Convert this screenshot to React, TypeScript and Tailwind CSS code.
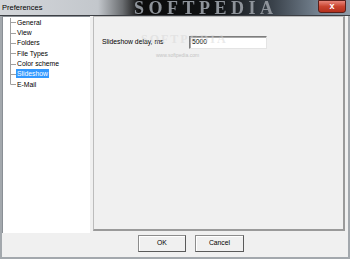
import React from 'react'

const items = ['General', 'View', 'Folders', 'File Types', 'Color scheme', 'Slideshow', 'E-Mail']
const ROW = 10.35

const TreeLines = () => {
  const last = ROW / 2 + ROW * (items.length - 1)
  return (
    <svg width="13" height={ROW * items.length} className="shrink-0">
      <line x1="7.5" y1="1" x2="7.5" y2={last} stroke="#a0a0a0" strokeWidth="1" />
      {items.map((_, i) => {
        const y = Math.round(ROW / 2 + ROW * i) + 0.5
        return <line key={i} x1="7.5" y1={y} x2="13" y2={y} stroke="#a0a0a0" strokeWidth="1" />
      })}
    </svg>
  )
}

const App = () => {
  return (
    <div className="relative w-[350px] h-[259px] flex flex-col bg-[#f0f0f0] overflow-hidden font-['Liberation_Sans',Arial,sans-serif]">
      {/* title bar */}
      <div className="relative h-[16px] shrink-0 flex items-center border-b border-[#3c3f44] bg-[linear-gradient(90deg,#d3d6da_0%,#c3c7cc_28%,#6a6d70_35%,#0c0c0c_40%,#101214_62%,#3a424b_78%,#7a8896_92%,#8d9aa7_100%)]">
        <span className="pl-[2px] text-[7.5px] text-black leading-none">Preferences</span>
        <span className="absolute left-[134px] top-0 text-[18px] font-bold tracking-[4.5px] text-[#8e939a] font-['Liberation_Serif',serif] blur-[0.6px] leading-[16px]">
          SOFTPEDIA
        </span>
        <div className="absolute right-[4px] top-0 w-[28px] h-[13px] rounded-b-[3px] border border-[#5a1f1a] bg-[linear-gradient(180deg,#e8867a_0%,#c9442f_50%,#b3301d_100%)] flex items-center justify-center">
          <span className="text-[9px] font-bold text-white leading-none">x</span>
        </div>
      </div>

      {/* body */}
      <div className="flex-1 flex flex-col border-l-2 border-r-2 border-b-2 border-[#a3a8ad]">
        <div className="flex h-[217px]">
          {/* tree */}
          <div className="w-[88px] h-full bg-white border-l border-t border-[#8a8f95] flex">
            <TreeLines />
            <ul className="flex flex-col text-[6.8px] text-black">
              {items.map((t) => (
                <li key={t} className="h-[10.35px] flex items-center">
                  <span
                    className={
                      t === 'Slideshow'
                        ? 'px-px leading-[9px] bg-[#3399ff] text-white'
                        : 'px-px leading-[9px]'
                    }
                  >
                    {t}
                  </span>
                </li>
              ))}
            </ul>
          </div>

          {/* settings panel */}
          <div className="ml-[3px] w-[252px] h-[215px] border border-[#bcbcbc] border-r-2 border-b-2 border-r-[#9a9a9a] border-b-[#9a9a9a] flex flex-col">
            <div className="flex items-center pl-[8px] pt-[19px]">
              <span className="w-[87px] text-[6.8px] text-black">Slideshow delay, ms</span>
              <div className="w-[78px] h-[13px] bg-white border border-[#7d7d7d] border-r-[#e4e4e4] border-b-[#e4e4e4] shadow-[inset_1px_1px_0_#a8a8a8] flex items-center pl-[2px] text-[6.8px] text-black">
                5000
              </div>
            </div>
          </div>
        </div>

        {/* buttons */}
        <div className="flex gap-[9px] mt-[2px] ml-[136px]">
          <button className="w-[48px] h-[17px] bg-[#f0f0f0] border border-[#8c8c8c] border-r-[#5a5a5a] border-b-[#5a5a5a] shadow-[inset_1px_1px_0_#ffffff] text-[6.8px] text-black flex items-center justify-center">
            OK
          </button>
          <button className="w-[49px] h-[17px] bg-[#f0f0f0] border border-[#8c8c8c] border-r-[#5a5a5a] border-b-[#5a5a5a] shadow-[inset_1px_1px_0_#ffffff] text-[6.8px] text-black flex items-center justify-center">
            Cancel
          </button>
        </div>
      </div>

      {/* watermark over the panel */}
      <span className="pointer-events-none absolute left-[141px] top-[33px] text-[12px] font-bold tracking-[2px] text-[#d6d6d6]/50 font-['Liberation_Serif',serif] leading-none">
        SOFTPEDIA
      </span>
      <span className="pointer-events-none absolute left-[156px] top-[53px] text-[5px] text-[#c4c4c4] leading-none">
        www.softpedia.com
      </span>
    </div>
  )
}

export default App
